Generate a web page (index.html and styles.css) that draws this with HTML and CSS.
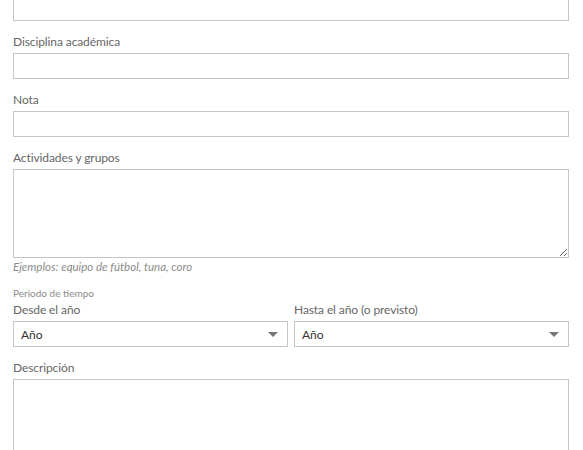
FILE: index.html
```html
<!DOCTYPE html>
<html>

<head>
    <title>Educación</title>
    <link rel="stylesheet" href="styles.css">
</head>

<body>
    <form class="form">
        <div class="field field-cut">
            <input type="text" id="school">
        </div>

        <div class="field">
            <label for="discipline">Disciplina académica</label>
            <input type="text" id="discipline">
        </div>

        <div class="field">
            <label for="grade">Nota</label>
            <input type="text" id="grade">
        </div>

        <div class="field">
            <label for="activities">Actividades y grupos</label>
            <textarea id="activities" class="activities"></textarea>
            <p class="hint">Ejemplos: equipo de fútbol, tuna, coro</p>
        </div>

        <!-- Periodo -->
        <div class="field period">
            <span class="period-title">Periodo de tiempo</span>
            <div class="period-row">
                <div class="period-col">
                    <label for="fromYear">Desde el año</label>
                    <div class="select">
                        <span>Año</span>
                        <i class="caret"></i>
                    </div>
                </div>
                <div class="period-col">
                    <label for="toYear">Hasta el año (o previsto)</label>
                    <div class="select">
                        <span>Año</span>
                        <i class="caret"></i>
                    </div>
                </div>
            </div>
        </div>

        <div class="field">
            <label for="description">Descripción</label>
            <textarea id="description" class="description"></textarea>
        </div>
    </form>
</body>

</html>
```

FILE: styles.css
```css
body {
    font-family: Lato, "Open Sans", sans-serif;
    margin: 0;
    padding: 0;
    background: #fff;
    color: #666;
    overflow: hidden;
}

.form {
    margin: -9px 14px 0 13px;
}

.field {
    margin-top: 12px;
}

.field-cut {
    margin-top: 0;
}

.field label {
    display: block;
    font-size: 12px;
    line-height: 18px;
    letter-spacing: -0.1px;
    margin-bottom: 2px;
}

.field input[type="text"],
.field textarea,
.select {
    display: block;
    width: 100%;
    height: 26px;
    margin: 0;
    padding: 0 7px;
    border: 1px solid #c6c6c3;
    border-radius: 0;
    background: #fff;
    box-sizing: border-box;
    font-family: inherit;
    font-size: 12px;
    color: #333;
    resize: vertical;
}

.field-cut input[type="text"] {
    height: 30px;
}

.field textarea.activities {
    height: 89px;
}

.field textarea.description {
    height: 120px;
}

.hint {
    margin: 2px 0 0;
    font-size: 11.5px;
    line-height: 14px;
    font-style: italic;
    color: #8c8c8c;
}

.period-title {
    display: block;
    font-size: 10px;
    line-height: 15px;
    color: #8c8c8c;
}

.period-row {
    display: flex;
    gap: 6px;
}

.period-col {
    flex: 1;
}

.select {
    display: flex;
    align-items: center;
    justify-content: space-between;
    padding: 0 9px 0 7px;
}

.caret {
    width: 0;
    height: 0;
    border-left: 5px solid transparent;
    border-right: 5px solid transparent;
    border-top: 5px solid #757575;
}
```
